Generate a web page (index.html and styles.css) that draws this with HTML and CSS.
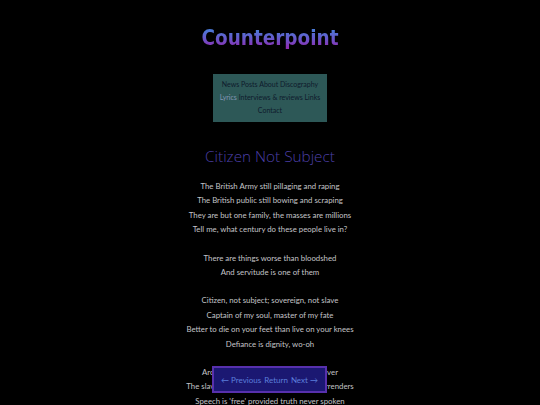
FILE: index.html
```html
<!DOCTYPE html>
<html>
<head>
<meta charset="utf-8">
<link rel="stylesheet" href="styles.css">
</head>
<body>
<header class="site-header">
  <h1 class="site-title">Counterpoint</h1>
  <nav class="main-nav">
    <a href="#">News</a> <a href="#">Posts</a> <a href="#">About</a> <a href="#">Discography</a><br>
    <a href="#" class="current">Lyrics</a> <a href="#">Interviews &amp; reviews</a> <a href="#">Links</a><br>
    <a href="#">Contact</a>
  </nav>
</header>
<main class="song">
  <h2 class="song-title">Citizen Not Subject</h2>
  <p class="stanza">The British Army still pillaging and raping<br>The British public still bowing and scraping<br>They are but one family, the masses are millions<br>Tell me, what century do these people live in?</p>
  <p class="stanza">There are things worse than bloodshed<br>And servitude is one of them</p>
  <p class="stanza">Citizen, not subject; sovereign, not slave<br>Captain of my soul, master of my fate<br>Better to die on your feet than live on your knees<br>Defiance is dignity, wo-oh</p>
  <p class="stanza">Archaic traditions paid in gold and silver<br>The slaves still kneel, the crown never surrenders<br>Speech is 'free' provided truth never spoken</p>
</main>
<nav class="pager">
  <a href="#">&larr; Previous</a> <a href="#">Return</a> <a href="#">Next &rarr;</a>
</nav>
</body>
</html>
```
FILE: styles.css
```css
html, body {
  margin: 0;
  padding: 0;
  background: #000;
}
body {
  font-family: "Lato", sans-serif;
  color: #c4c4c8;
  text-align: center;
}
.site-header {
  display: flex;
  flex-direction: column;
  align-items: center;
  padding-top: 26px;
}
.site-title {
  margin: 0;
  font-family: "DejaVu Sans Condensed", sans-serif;
  font-weight: bold;
  font-size: 20.5px;
  line-height: 24px;
  background: linear-gradient(180deg, #4a7ad8 15%, #6a55c8 55%, #8e2cb2 90%);
  -webkit-background-clip: text;
  background-clip: text;
  color: transparent;
}
.main-nav {
  margin-top: 24px;
  width: 114px;
  padding: 4px 0 5px;
  background: #2d5857;
  font-size: 7px;
  line-height: 13px;
  white-space: nowrap;
}
.main-nav a {
  color: #0e1a2c;
  text-decoration: none;
}
.main-nav a.current {
  color: #8395b3;
}
.song {
  padding-top: 23px;
}
.song-title {
  margin: 0 0 12px;
  font-family: "Open Sans", sans-serif;
  font-weight: 300;
  font-size: 15.3px;
  line-height: 22px;
  color: #4b3fa6;
}
.stanza {
  margin: 0 0 14px;
  font-size: 7.8px;
  line-height: 14.4px;
}
.pager {
  position: fixed;
  left: 212px;
  top: 366px;
  width: 111px;
  height: 23px;
  display: flex;
  justify-content: center;
  align-items: center;
  gap: 3px;
  background: #1b1872;
  border: 2px solid #5730ad;
  font-size: 8px;
}
.pager a {
  color: #5b7fdc;
  text-decoration: none;
}
```
